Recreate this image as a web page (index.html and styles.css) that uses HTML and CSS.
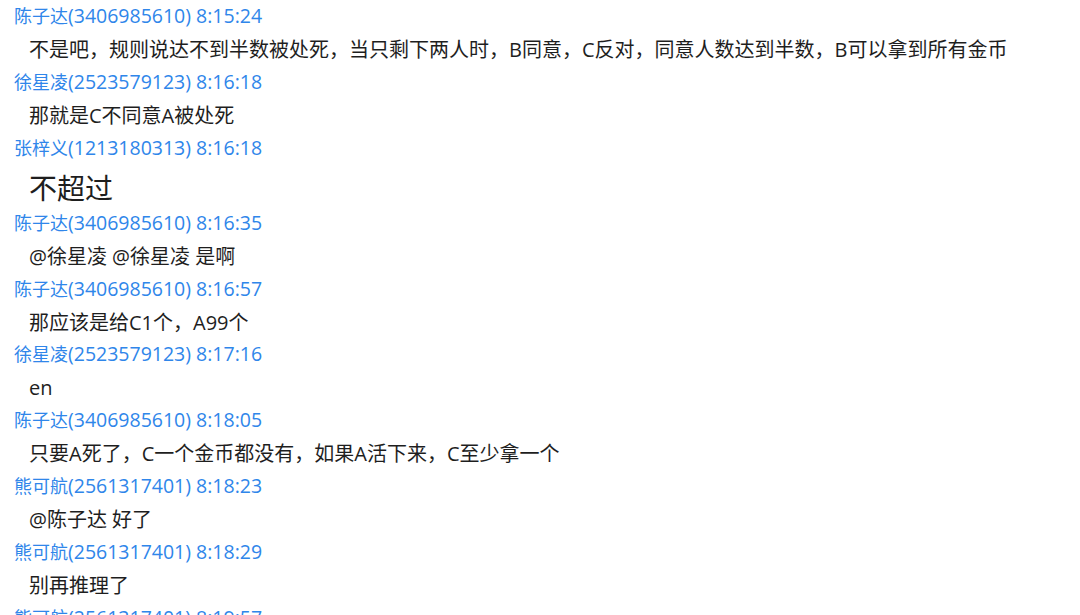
FILE: index.html
```html
<!DOCTYPE html>
<html lang="zh-CN">
<head>
<meta charset="utf-8">
<link rel="stylesheet" href="styles.css">
</head>
<body>
<div class="log">
  <div class="head">陈子达<span class="meta">(3406985610) 8:15:24</span></div>
  <div class="msg">不是吧，规则说达不到半数被处死，当只剩下两人时，B同意，C反对，同意人数达到半数，B可以拿到所有金币</div>
  <div class="head">徐星凌<span class="meta">(2523579123) 8:16:18</span></div>
  <div class="msg">那就是C不同意A被处死</div>
  <div class="head">张梓义<span class="meta">(1213180313) 8:16:18</span></div>
  <div class="msg msg-big">不超过</div>
  <div class="head">陈子达<span class="meta">(3406985610) 8:16:35</span></div>
  <div class="msg">@徐星凌 @徐星凌 是啊</div>
  <div class="head">陈子达<span class="meta">(3406985610) 8:16:57</span></div>
  <div class="msg">那应该是给C1个，A99个</div>
  <div class="head">徐星凌<span class="meta">(2523579123) 8:17:16</span></div>
  <div class="msg">en</div>
  <div class="head">陈子达<span class="meta">(3406985610) 8:18:05</span></div>
  <div class="msg">只要A死了，C一个金币都没有，如果A活下来，C至少拿一个</div>
  <div class="head">熊可航<span class="meta">(2561317401) 8:18:23</span></div>
  <div class="msg">@陈子达 好了</div>
  <div class="head">熊可航<span class="meta">(2561317401) 8:18:29</span></div>
  <div class="msg">别再推理了</div>
  <div class="head">熊可航<span class="meta">(2561317401) 8:19:57</span></div>
</div>
</body>
</html>
```

FILE: styles.css
```css
html, body {
  margin: 0;
  padding: 0;
  background: #ffffff;
  overflow: hidden;
}

.log {
  display: flex;
  flex-direction: column;
  padding: 1px 0 0 14px;
  font-family: "Open Sans", "Noto Sans CJK SC", sans-serif;
}

.head {
  flex: none;
  height: 30px;
  line-height: 30px;
  font-size: 18px;
  color: #2f86ea;
  white-space: nowrap;
}

.meta {
  font-size: 19.5px;
}

.msg {
  flex: none;
  padding: 2px 0 0 15px;
  height: 33.85px;
  line-height: 33.85px;
  font-size: 20px;
  color: #1e1e1e;
  white-space: nowrap;
}

.msg-big {
  padding-top: 5px;
  height: 40px;
  line-height: 40px;
  font-size: 28px;
}
```
